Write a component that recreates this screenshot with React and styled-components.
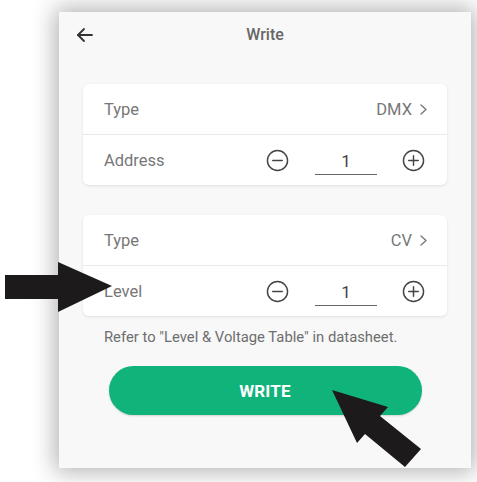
import React from "react";
import styled, { createGlobalStyle } from "styled-components";

const Global = createGlobalStyle`
  html, body { margin: 0; padding: 0; background: #ffffff; }
  body { font-family: Roboto, "Liberation Sans", Arial, sans-serif; }
`;

const Page = styled.div`
  position: relative;
  width: 477px;
  height: 482px;
  padding: 12px 6px 14px 59px;
  box-sizing: border-box;
  overflow: hidden;
`;

const Phone = styled.div`
  width: 412px;
  height: 456px;
  background: #f8f8f8;
  box-shadow: 0 0 22px 4px rgba(0, 0, 0, 0.3);
  display: flex;
  flex-direction: column;
  box-sizing: border-box;
  padding: 0 24px;
`;

const Header = styled.div`
  height: 46px;
  display: flex;
  align-items: center;
  position: relative;
  justify-content: center;
`;

const Back = styled.div`
  position: absolute;
  left: -8px;
  top: 13px;
  display: flex;
`;

const Title = styled.div`
  font-size: 16px;
  font-weight: 500;
  color: #666;
  margin-top: -1px;
`;

const Card = styled.div`
  background: #fff;
  border-radius: 6px;
  box-shadow: 0 1px 3px rgba(0, 0, 0, 0.1);
  margin-top: ${(p) => p.$mt}px;
  display: flex;
  flex-direction: column;
`;

const Row = styled.div`
  height: 50px;
  display: flex;
  align-items: center;
  padding: 0 ${(p) => (p.$stepper ? 22 : 19)}px 0 21px;
  border-top: ${(p) => (p.$divider ? "1px solid #e9e9e9" : "none")};
`;

const Label = styled.div`
  font-size: 16.5px;
  color: #777;
  flex: 1;
`;

const Value = styled.div`
  font-size: 16.5px;
  color: #777;
  display: flex;
  align-items: center;
  gap: 7px;
`;

const Stepper = styled.div`
  display: flex;
  align-items: center;
`;

const Field = styled.div`
  width: 62px;
  margin: 0 25px 0 26px;
  text-align: center;
  font-size: 17px;
  color: #444;
  border-bottom: 1px solid #666;
  padding: 2px 0 3px;
  position: relative;
  top: 2px;
`;

const Note = styled.div`
  margin: 12px 0 0 21px;
  font-size: 14.8px;
  color: #6e6e6e;
  white-space: nowrap;
`;

const WriteButton = styled.button`
  margin: 20px auto 0;
  width: 313px;
  height: 49px;
  border: none;
  border-radius: 25px;
  background: #10b47b;
  color: #fff;
  font-family: Roboto, "Liberation Sans", Arial, sans-serif;
  font-size: 17px;
  font-weight: 700;
  letter-spacing: 0.2px;
  box-shadow: 0 1px 2px rgba(0, 0, 0, 0.15);
`;

const Overlay = styled.svg`
  position: absolute;
  left: 0;
  top: 0;
  pointer-events: none;
`;

const CircleIcon = ({ plus }) => (
  <svg width="23" height="23" viewBox="0 0 24 24" fill="none" stroke="#444" strokeWidth="1.5" strokeLinecap="round">
    <circle cx="12" cy="12" r="10.5" />
    <line x1="7" y1="12" x2="17" y2="12" />
    {plus && <line x1="12" y1="7" x2="12" y2="17" />}
  </svg>
);

const Chevron = () => (
  <svg width="9" height="13" viewBox="0 0 9 13" fill="none" stroke="#777" strokeWidth="1.4" strokeLinecap="round" strokeLinejoin="round">
    <polyline points="2,2 7,6.5 2,11" />
  </svg>
);

const StepRow = ({ label }) => (
  <Row $divider $stepper>
    <Label>{label}</Label>
    <Stepper>
      <CircleIcon />
      <Field>1</Field>
      <CircleIcon plus />
    </Stepper>
  </Row>
);

const TypeRow = ({ value }) => (
  <Row>
    <Label>Type</Label>
    <Value>
      {value}
      <Chevron />
    </Value>
  </Row>
);

export default function App() {
  return (
    <>
      <Global />
      <Page>
        <Phone>
          <Header>
            <Back>
              <svg width="20" height="20" viewBox="0 0 20 20" fill="none" stroke="#333" strokeWidth="1.8" strokeLinecap="round" strokeLinejoin="round">
                <line x1="3" y1="10" x2="17" y2="10" />
                <polyline points="9,4 3,10 9,16" />
              </svg>
            </Back>
            <Title>Write</Title>
          </Header>
          <Card $mt={26}>
            <TypeRow value="DMX" />
            <StepRow label="Address" />
          </Card>
          <Card $mt={30}>
            <TypeRow value="CV" />
            <StepRow label="Level" />
          </Card>
          <Note>Refer to "Level &amp; Voltage Table" in datasheet.</Note>
          <WriteButton>WRITE</WriteButton>
        </Phone>
        <Overlay width="477" height="482" viewBox="0 0 477 482">
          <polygon fill="#1c1a1a" points="5,275 58,275 58,262 112,286 58,312 58,299 5,299" />
          <polygon fill="#1c1a1a" points="332,390 388,407 380,416 421,449 405,467 365,434 357,443" />
        </Overlay>
      </Page>
    </>
  );
}
